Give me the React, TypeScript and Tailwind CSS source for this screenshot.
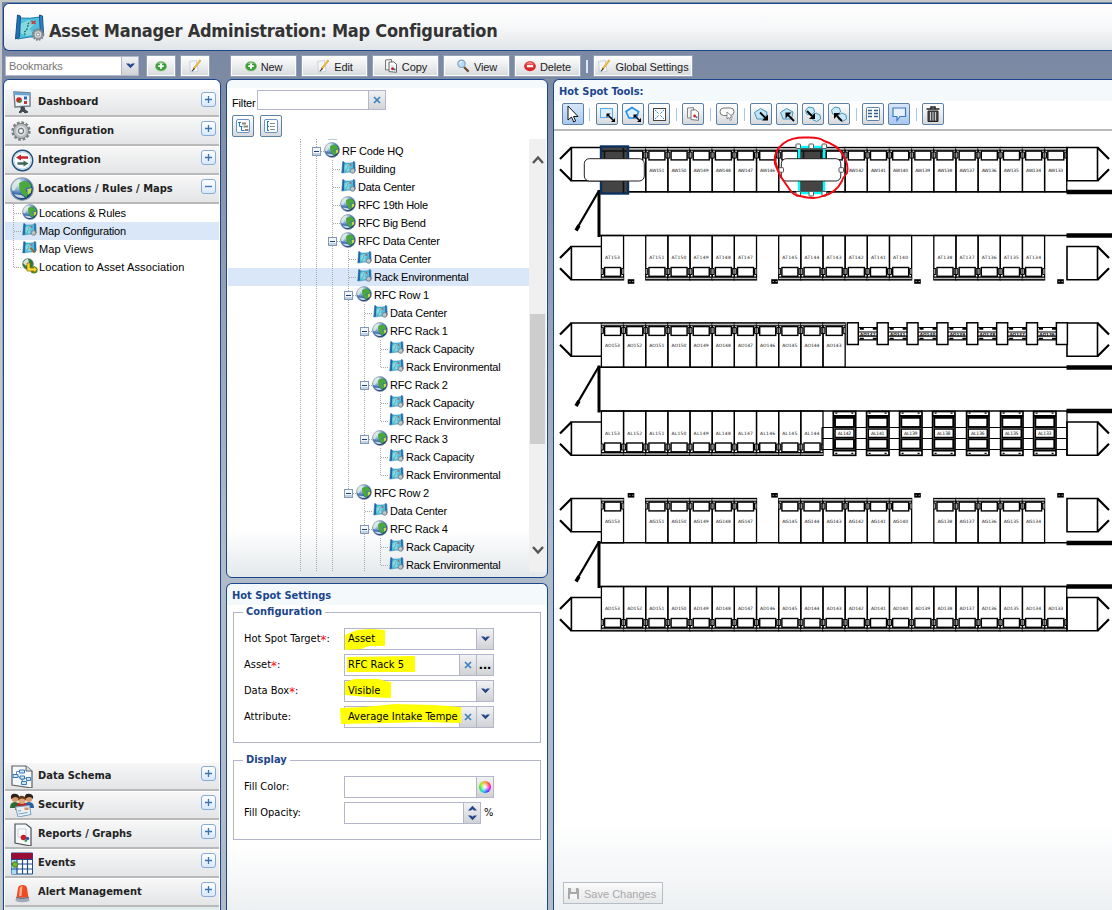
import type { ReactNode } from "react";

const title = "font-['DejaVu_Sans_Condensed','DejaVu_Sans',sans-serif] font-bold [font-stretch:condensed]";
const label = "font-['DejaVu_Sans_Condensed','DejaVu_Sans',sans-serif] text-[11px] [font-stretch:condensed]";

/* ---------- icons ---------- */
function Globe({ className }: { className: string }) {
  return (
    <svg viewBox="0 0 16 16" className={className}>
      <defs>
        <radialGradient id="sea" cx="30%" cy="22%" r="85%">
          <stop offset="0" stopColor="#f2f7fb" />
          <stop offset=".35" stopColor="#8fb2d8" />
          <stop offset=".65" stopColor="#2a5ca4" />
          <stop offset="1" stopColor="#12356e" />
        </radialGradient>
      </defs>
      <circle cx="8" cy="8" r="7.5" fill="url(#sea)" stroke="#8c9cab" strokeWidth=".7" />
      <path d="M6 4l3.500-1.500 3 1 1.800 2.400-.8 1.500-2.500-.5-1 1.800 2 2-1 3-3-2L6.300 8z" fill="#4aa83c" />
      <path d="M1.200 6.200C2 3.500 4 1.800 6.500 1.400L7 3 4.800 5.600 3 9.200 1.300 9z" fill="#dce8e4" opacity=".9" />
      <path d="M11.500 8l3-.6-.6 3-2 1.600z" fill="#c7dc4a" />
      <path d="M2.500 11.500c2 2.500 5 3 7.500 2.200L7.500 12z" fill="#dfe8ee" opacity=".85" />
    </svg>
  );
}
function GearShape({ x, y, s, fill = "#8f9aa3" }: { x: number; y: number; s: number; fill?: string }) {
  return (
    <g transform={`translate(${x} ${y}) scale(${s})`}>
      <circle r="8.200" fill="none" stroke="#7b8286" strokeWidth="2.600" strokeDasharray="2.600 1.700" />
      <circle r="7.400" fill={fill} stroke="#70787d" strokeWidth=".8" />
      <circle r="4.800" fill="#dcdfe1" />
      <circle r="2.500" fill="#f6f7f8" stroke="#6c7479" strokeWidth="1.200" />
    </g>
  );
}
function MapIcon({ className, view }: { className: string; view?: boolean }) {
  return (
    <svg viewBox="0 0 30 27" className={className}>
      <path d="M5 4q10 1 21-1l1 20q-12-1-24 2z" fill="#52bfdc" stroke="#1679a8" />
      <path d="M6 10l8-4 6 4-5 5 4 5-7 2-6-3z" fill="#93e0e6" opacity=".8" />
      <path d="M11 21c-3-3 1-4 2-7s-1-4 3-6" fill="none" stroke="#167a55" strokeWidth="1.300" strokeDasharray="2 1" />
      <path d="M17 7l4 3m0-3l-4 3" stroke="#cf3030" strokeWidth="1.400" />
      <path d="M3 1l3 1-1 21-4 2z" fill="#1f72b6" stroke="#174f87" />
      <path d="M25 1l3 1 1 18-3 3z" fill="#2c86c7" stroke="#174f87" />
      {view ? <path d="M17 14l9 10" stroke="#a6662f" strokeWidth="4" /> : <GearShape x={23.5} y={20.5} s={0.66} />}
    </svg>
  );
}
function Plus() {
  return (
    <svg viewBox="0 0 12 12" className="h-3 w-3 shrink-0">
      <ellipse cx="6" cy="6.300" rx="5.700" ry="4.800" fill="#3f9e3c" stroke="#a5cba0" strokeWidth=".6" />
      <path d="M2.400 4Q6 0 9.600 4z" fill="#8cc986" />
      <path d="M6 3.400v5.400M3.200 6.100h5.600" stroke="#fff" strokeWidth="1.900" />
    </svg>
  );
}
function Pencil() {
  return (
    <svg viewBox="0 0 14 14" className="h-3.5 w-3.5 shrink-0">
      <path d="M1.500 2.500l7-1L10 12.400l-7.500.8z" fill="#f3f5f8" stroke="#c2cad3" strokeWidth=".8" />
      <path d="M12.500 1.200L5.500 9.800" stroke="#d89b1f" strokeWidth="1.900" />
      <path d="M6 9l-2.600 3.200 1 .3 2.400-2.500z" fill="#333" />
      <path d="M12 1.600L6.200 8.600" stroke="#ffe070" strokeWidth=".8" />
    </svg>
  );
}
function CopyGlyph({ className }: { className: string }) {
  return (
    <svg viewBox="0 0 14 14" className={className}>
      <path d="M1.500 1l6-.5.5 10-6.500.5z" fill="#f4f4f4" stroke="#777" />
      <path d="M5 3.200l4.500-.4 3 2.500v8L5 12.600z" fill="#fff" stroke="#666" />
      <path d="M6.500 6h4v3h-4z" fill="#e5e8ec" />
      <circle cx="8.600" cy="9.700" r="1.500" fill="#c02127" />
      <circle cx="10.700" cy="10.600" r="1" fill="#3b61b7" />
    </svg>
  );
}
function Magnifier() {
  return (
    <svg viewBox="0 0 14 14" className="h-3.5 w-3.5 shrink-0">
      <path d="M8 8l4.600 4.600" stroke="#6b4a35" strokeWidth="2.200" />
      <circle cx="5.500" cy="4.800" r="3.700" fill="#b5dbf7" stroke="#7fa3c0" strokeWidth="1.100" />
      <path d="M3.400 4.400q.8-1.700 2.400-1.700" stroke="#fff" fill="none" />
    </svg>
  );
}
function Minus() {
  return (
    <svg viewBox="0 0 12 12" className="h-3 w-3 shrink-0">
      <ellipse cx="6" cy="6.300" rx="5.800" ry="5" fill="#d92626" />
      <path d="M1.400 4.400Q6-.4 10.600 4.400z" fill="#ee7d75" />
      <path d="M2.800 6.200h6.400" stroke="#fff" strokeWidth="2.200" />
    </svg>
  );
}
function Down() {
  return (
    <svg viewBox="0 0 9 6" className="h-[6px] w-[9px]">
      <path d="M0 .5h3l1.500 1.300L6 .5h3L4.500 5.200z" fill="#26468c" />
    </svg>
  );
}
function Cross() {
  return (
    <svg viewBox="0 0 8 8" className="h-2 w-2">
      <path d="M1 1l6 6M7 1L1 7" stroke="#3f83bd" strokeWidth="1.700" />
    </svg>
  );
}
const sec = "h-6 w-6 shrink-0";
function DashboardIcon() {
  return (
    <svg viewBox="0 0 24 24" className={sec}>
      <path d="M4 2l16 1 0 13-15 1z" fill="#eef5fa" stroke="#6a7a86" strokeWidth="1.400" />
      <path d="M4 2l16 1v2.500L4 5z" fill="#6aa5d3" />
      <circle cx="9" cy="10" r="2.800" fill="#ce2427" />
      <path d="M9 10h3a3 3 0 0 1-3 3z" fill="#2c9a44" />
      <path d="M14 6.500h3v3h-3z" fill="#2f64b5" />
      <path d="M14 11h3v3h-3z" fill="#c7333a" />
      <path d="M11 17l3 0 1 3 3 2-3 1-2-2-3 2-1-1 2-2z" fill="#43494f" stroke="#43494f" />
    </svg>
  );
}
function IntegrationIcon() {
  return (
    <svg viewBox="0 0 24 24" className={sec}>
      <circle cx="12.500" cy="12.500" r="10.200" fill="#fafdff" stroke="#1d4f7c" strokeWidth="1.400" />
      <circle cx="12.500" cy="12.500" r="8.600" fill="none" stroke="#b5cfe2" />
      <path d="M6 9.500l5-3v1.800h7v2.400h-7v1.800z" fill="#c8232b" />
      <path d="M18.500 15.500l-5-3v1.800H7.500v2.400h6v1.800z" fill="#3c6a58" />
    </svg>
  );
}
function PageIcon({ schema }: { schema?: boolean }) {
  return (
    <svg viewBox="0 0 24 24" className={sec}>
      {schema ? (
        <>
          <path d="M2 2l14 0 6 5v17L2 21z" fill="#f7f8f9" stroke="#5c6267" strokeWidth="1.200" />
          <path d="M16 2v5h6" fill="#ddd" stroke="#5c6267" />
          <path d="M6.500 11v-3.500h5M8 12l4 4 4-2M14 19l-2-3" stroke="#6b8db0" fill="none" />
          <g fill="#cfe7fa" stroke="#3678b5">
            <path d="M9.500 6h5v3h-5zM3 10.500h5v3H3zM10 12h4.500v3H10zM16.500 13.500h4v3h-4zM11.500 17.500h5v3h-5z" />
          </g>
        </>
      ) : (
        <>
          <path d="M5 2l11 0 5 4v18L5 21z" fill="#f7f8f9" stroke="#4c5257" strokeWidth="1.200" />
          <path d="M8 7h8v8H8z" fill="#fff" stroke="#c5cdd6" />
          <circle cx="13.500" cy="15.500" r="2.800" fill="#c5202a" />
          <circle cx="17.500" cy="16.500" r="1.700" fill="#2e57ab" />
          <circle cx="15.800" cy="18.800" r="1.300" fill="#35983d" />
        </>
      )}
    </svg>
  );
}
function SecurityIcon() {
  return (
    <svg viewBox="0 0 24 24" className={sec}>
      <path d="M0 15q0-6 5-6t5 6z" fill="#2d6a35" />
      <path d="M14 15q0-6 5-6t5 6z" fill="#2a5ea5" />
      <circle cx="5" cy="5.500" r="3.400" fill="#d99a6b" />
      <circle cx="19" cy="5.500" r="3.400" fill="#d99a6b" />
      <path d="M1 6Q0 .5 5 .8T9 6Q6 2 1 6zM15 6Q14 .5 19 .8T23 6Q20 2 15 6z" fill="#2d211c" />
      <path d="M5 17q1-8 7-8t6 8z" fill="#b32626" />
      <circle cx="12" cy="7.500" r="3.600" fill="#e0a577" />
      <path d="M8 7.500Q8 2.500 12 2.800t4 4.700Q12 3.500 8 7.500z" fill="#6b3a1c" />
      <path d="M5.500 14l14-1.500 1.500 9-13 2.500z" fill="#e7f1f8" stroke="#7ba0bb" />
      <path d="M8 18l3-.3M8.500 21l9-1.500" stroke="#7ba0bb" />
      <path d="M14.500 14.500h4v2.500h-4z" fill="#dd8b63" />
    </svg>
  );
}
function EventsIcon() {
  return (
    <svg viewBox="0 0 24 24" className={sec}>
      <path d="M1.500 2h21v21h-21z" fill="#fff" stroke="#1e4a8e" />
      <path d="M1.500 2h21v6h-21z" fill="#980f35" />
      <path d="M1.500 8H7v15H1.500z" fill="#a9dcf5" />
      <path d="M1 8.500h22M1 13h22M1 18h22M7 8v15M12.500 8v15M17.500 8v15" stroke="#1e4a8e" strokeWidth="1.200" />
      <circle cx="5" cy="13.500" r="2.700" fill="#78b72a" stroke="#4b7d1e" />
    </svg>
  );
}
function AlertIcon() {
  return (
    <svg viewBox="0 0 24 24" className={sec}>
      <path d="M6.500 18L8 8q.5-3 4.500-3t4.500 3l1.500 10z" fill="#ee4a23" />
      <path d="M9 16l.8-8q1-2 2.700-2l-1 10z" fill="#ffb08f" />
      <path d="M6 17.500h13l.5 3.500q-7 2.500-14 0z" fill="#a4a8b8" />
      <path d="M6 17.500q6.500 2 13 0" stroke="#686d80" fill="none" />
    </svg>
  );
}

/* ---------- header & toolbars ---------- */
function ToolButton({ icon, text, w }: { icon: ReactNode; text?: string; w: string }) {
  return (
    <div className={`flex h-[20px] shrink-0 items-center justify-center gap-1 border border-[#fbfcfd] bg-linear-to-b from-[#fdfdfd] to-[#d9dcdf] font-['Liberation_Sans',sans-serif] text-[11px] tracking-[-0.1px] text-[#1d1d1d] shadow-[0_0_0_1px_#94a0b5] ${w}`}>
      {icon}
      {text && <span className="pt-[2px]">{text}</span>}
    </div>
  );
}

/* ---------- left navigation ---------- */
function Section({ icon, text, open }: { icon: ReactNode; text: string; open?: boolean }) {
  return (
    <div className="flex h-[29px] shrink-0 items-center border-t border-t-white border-b-2 border-b-[#b9b9b9] bg-linear-to-b from-[#f7f7f7] to-[#e3e5e7] pr-[3px] pl-[5px]">
      {icon}
      <span className={`${title} ml-[4px] pt-px text-[11px] text-[#222]`}>{text}</span>
      <span className="mb-[5px] ml-auto flex h-[15px] w-[15px] items-center justify-center rounded-[3px] border border-[#86abd9] bg-linear-to-b from-white to-[#d8e8fb]">
        <svg viewBox="0 0 7 7" className="h-[7px] w-[7px]">
          <path d={open ? "M0 3.500h7" : "M0 3.500h7M3.500 0v7"} stroke="#3a74b5" strokeWidth="1.300" />
        </svg>
      </span>
    </div>
  );
}
const links = [
  { text: "Locations & Rules", icon: <Globe className="h-4 w-4" />, track: "tracking-[-0.1px]" },
  { text: "Map Configuration", icon: <MapIcon className="h-[13px] w-[15px]" />, on: true, track: "tracking-[-0.17px]" },
  { text: "Map Views", icon: <MapIcon view className="h-[13px] w-[15px]" />, track: "tracking-[0.1px]" },
  {
    text: "Location to Asset Association",
    track: "tracking-[0.1px]",
    icon: (
      <svg viewBox="0 0 16 16" className="h-4 w-4">
        <circle cx="6" cy="6" r="5.500" fill="#2b7a35" stroke="#889" strokeWidth=".6" />
        <path d="M1 5q2-4 5-4l1 3-3 4z" fill="#d7e5dc" />
        <circle cx="12" cy="12" r="3.600" fill="#3f8f30" />
        <path d="M5 5h3v5h4V8l3 3.500-3 3.500v-2H5z" fill="#ffd92b" stroke="#8a6a08" strokeWidth=".7" />
      </svg>
    ),
  },
];
function Sidebar() {
  return (
    <div className="flex w-[218px] shrink-0 flex-col rounded-t-[6px] border border-b-0 border-[#1c468c] bg-white px-px pt-[8px]">
      <Section icon={<DashboardIcon />} text="Dashboard" />
      <Section icon={<svg viewBox="0 0 24 24" className={sec}><GearShape x={11} y={12} s={1.02} fill="#b8bcbe" /></svg>} text="Configuration" />
      <Section icon={<IntegrationIcon />} text="Integration" />
      <Section icon={<Globe className={sec} />} text="Locations / Rules / Maps" open />
      <div className="flex-1">
        {links.map((l, i) => (
          <div key={l.text} className={`flex h-[18px] items-center font-['Liberation_Sans',sans-serif] text-[11px] text-black ${l.on ? "bg-[#d9e7f8]" : ""}`}>
            <Guide kind={i === 3 ? "L" : "T"} />
            <span className="flex w-[17px] shrink-0 justify-center pb-[3px]">{l.icon}</span>
            <span className={`ml-px ${l.track}`}>{l.text}</span>
          </div>
        ))}
      </div>
      <Section icon={<PageIcon schema />} text="Data Schema" />
      <Section icon={<SecurityIcon />} text="Security" />
      <Section icon={<PageIcon />} text="Reports / Graphs" />
      <Section icon={<EventsIcon />} text="Events" />
      <Section icon={<AlertIcon />} text="Alert Management" />
      <div className="h-[3px] shrink-0 bg-[#e2ebec]" />
    </div>
  );
}

/* ---------- location tree ---------- */
function Guide({ kind }: { kind: string }) {
  const v = kind === "|" || kind === "T" || kind === "-" ? 18 : kind === "L" || kind === "_" ? 9 : 0;
  const box = kind === "-" || kind === "_";
  return (
    <svg viewBox="0 0 16 18" className="h-[18px] w-4 shrink-0">
      {v > 0 && <path d={`M8.500 0V${v}`} stroke="#a8a8a8" strokeDasharray="1 1" />}
      {(kind === "T" || kind === "L" || box) && <path d="M9 9.500h7" stroke="#a8a8a8" strokeDasharray="1 1" />}
      {box && (
        <>
          <rect x="4.500" y="5.500" width="8" height="8" fill="#f2f6fa" stroke="#8299b5" />
          <path d="M5 11h7v2H5z" fill="#c3d3e5" />
          <path d="M6 9.500h5" stroke="#1d3f77" />
        </>
      )}
    </svg>
  );
}
const tree: [string, string][] = [
  ["|-", "RF Code HQ"], ["||T", "Building"], ["||T", "Data Center"], ["||T", "RFC 19th Hole"], ["||T", "RFC Big Bend"],
  ["||-", "RFC Data Center"], ["|||T", "Data Center"], ["|||T", "Rack Environmental"], ["|||-", "RFC Row 1"],
  ["||||T", "Data Center"], ["||||-", "RFC Rack 1"], ["|||||T", "Rack Capacity"], ["|||||L", "Rack Environmental"],
  ["||||-", "RFC Rack 2"], ["|||||T", "Rack Capacity"], ["|||||L", "Rack Environmental"],
  ["||||_", "RFC Rack 3"], ["|||| T", "Rack Capacity"], ["|||| L", "Rack Environmental"],
  ["|||_", "RFC Row 2"], ["||| T", "Data Center"], ["||| -", "RFC Rack 4"], ["||| |T", "Rack Capacity"], ["||| |L", "Rack Environmental"],
];
function SmallButton({ children, on }: { children: ReactNode; on?: boolean }) {
  return (
    <div className={`flex h-[22px] w-[22px] shrink-0 items-center justify-center rounded-[2px] border border-[#5d81a5] ${on ? "bg-linear-to-b from-[#d6e6fa] to-[#a9c8ef]" : "bg-linear-to-b from-white to-[#d6d9dc]"}`}>
      <svg viewBox="0 0 20 20" className="h-5 w-5">{children}</svg>
    </div>
  );
}
function TreePanel() {
  return (
    <div className="flex h-[499px] shrink-0 flex-col rounded-[6px] border border-[#1c468c] bg-[linear-gradient(to_bottom,#f4f9fb_0,#f4f9fb_8px,#fff_8px,#fff_450px,#e3e8eb_100%)] px-px pt-[10px]">
      <div className="flex h-[20px] items-end pl-[4px]">
        <span className="w-[25px] font-['Liberation_Sans',sans-serif] text-[11px] leading-[14px] tracking-[-0.15px]">Filter</span>
        <span className="h-[20px] w-[112px] border border-[#b3b6cb] bg-white" />
        <span className="flex h-[20px] w-[17px] items-center justify-center border border-l-0 border-[#b3b6cb] bg-linear-to-b from-[#f0f1f3] to-[#d3d5d8]"><Cross /></span>
      </div>
      <div className="mt-[5px] flex gap-[6px] pl-[4px]">
        <SmallButton>
          <rect x="3.500" y="3.500" width="13" height="13" rx="1.500" fill="#fff" stroke="#6d94c4" />
          <path d="M5 6.500h3M6.500 6.500v4h3M8.500 10.500v4h3" stroke="#1f78d1" fill="none" />
          <path d="M9 7.500h4M10.500 10.500h4.500M12 14h3.500" stroke="#8b8580" strokeWidth="2" />
        </SmallButton>
        <SmallButton>
          <rect x="3.500" y="3.500" width="13" height="13" rx="1.500" fill="#fff" stroke="#6d94c4" />
          <path d="M6.500 5v10M6 5.500h2M6 10.500h2M6 14.500h2" stroke="#1f78d1" fill="none" />
          <path d="M9 7.500h5M9 10.500h5M9 13.500h5" stroke="#8a8a8a" />
        </SmallButton>
      </div>
      <div className="mt-[2px] flex h-[433px]">
        <div className="w-[301px] overflow-hidden">
          <div className="flex h-[3px] pl-16">
            <svg viewBox="0 0 48 3" className="h-[3px] w-12"><path d="M8.500 0v3M24.500 0v3" stroke="#a8a8a8" strokeDasharray="1 1" /><path d="M36 0h9" stroke="#7c94a8" /></svg>
          </div>
          {tree.map(([g, text], i) => (
            <div key={i} className={`flex h-[18px] items-center pl-16 font-['Liberation_Sans',sans-serif] text-[11px] tracking-[-0.22px] whitespace-nowrap text-black ${i === 7 ? "bg-[#d9e7f8]" : ""}`}>
              {g.split("").map((c, k) => <Guide key={k} kind={c} />)}
              <span className="flex w-4 shrink-0 justify-center pb-[3px]">
                {text.startsWith("RF") ? <Globe className="h-4 w-4" /> : <MapIcon className="h-[13px] w-[15px]" />}
              </span>
              <span className="ml-[2px] pt-px">{text}</span>
            </div>
          ))}
        </div>
        <div className="flex w-[17px] flex-col items-center bg-[#f0f0f0] pt-[16px]">
          <svg viewBox="0 0 12 9" className="h-[9px] w-3"><path d="M1 8l5-5.500L11 8" stroke="#555" strokeWidth="2.400" fill="none" /></svg>
          <div className="mt-[150px] h-[130px] w-[15px] bg-[#cdcdcd]" />
          <svg viewBox="0 0 12 9" className="mt-[102px] h-[9px] w-3"><path d="M1 1l5 5.500L11 1" stroke="#555" strokeWidth="2.400" fill="none" /></svg>
        </div>
      </div>
    </div>
  );
}

/* ---------- hot spot settings ---------- */
function Trigger({ children }: { children: ReactNode }) {
  return <span className="flex w-[17px] items-center justify-center border-l border-[#b3b6cb] bg-linear-to-b from-[#f1f2f4] to-[#d0d2d6]">{children}</span>;
}
function Field({ name, star, value, mark, children }: { name: string; star?: boolean; value?: string; mark?: string; children: ReactNode }) {
  return (
    <div className="mb-[4px] flex h-[22px]">
      <span className={`${label} flex w-[100px] pt-[3px] text-black`}>
        {name}{star && <span className="text-[13px] leading-[17px] text-[#f00]">*</span>}:
      </span>
      <div className="relative flex h-[22px] w-[150px] border border-[#b3b6cb] bg-white">
        {mark && <svg viewBox="0 0 124 24" className="absolute -top-[3px] -left-[6px] h-6 w-[124px]"><path d={mark} fill="#ff0" /></svg>}
        <span className={`${label} relative flex-1 overflow-hidden pt-[2px] pl-[3px] whitespace-nowrap text-black`}>{value}</span>
        {children}
      </div>
    </div>
  );
}
function Group({ name, children, h }: { name: string; children: ReactNode; h: string }) {
  return (
    <fieldset className={`ml-[5px] w-[308px] border border-[#b3b6cb] pl-[10px] ${h}`}>
      <legend className={`${title} -ml-px px-[3px] text-[11px] leading-[14px] text-[#1c468c]`}>{name}</legend>
      {children}
    </fieldset>
  );
}
function SettingsPanel() {
  return (
    <div className="mt-[5px] flex-1 rounded-t-[6px] border border-b-0 border-[#1c468c] bg-[linear-gradient(to_bottom,#f4f9fb_0,#f4f9fb_21px,#fff_21px,#fff_260px,#edf0f2_100%)] px-px">
      <div className={`${title} h-[21px] pt-[3px] pl-[4px] text-[11px] leading-[17px] text-[#1c468c]`}>Hot Spot Settings</div>
      <Group name="Configuration" h="h-[138px]">
        <div className="pt-[9px]">
          <Field name="Hot Spot Target" star value="Asset" mark="M6 9l12-5 14-1 14 1v16H30l-8 3-16 1z"><Trigger><Down /></Trigger></Field>
          <Field name="Asset" star value="RFC Rack 5" mark="M8 5l68-1v16H8z"><Trigger><Cross /></Trigger><Trigger><span className="pb-[3px] font-['Liberation_Sans',sans-serif] text-[15px] leading-none font-bold">...</span></Trigger></Field>
          <Field name="Data Box" star value="Visible" mark="M6 4l10-3h24l6 2 6 1v16l-24-1-22-2z"><Trigger><Down /></Trigger></Field>
          <Field name="Attribute" value="Average Intake Tempe" mark="M1 4l24-1L56 0l38 1 28 2v16l-40-1-32 1-48 1z"><Trigger><Cross /></Trigger><Trigger><Down /></Trigger></Field>
        </div>
      </Group>
      <Group name="Display" h="h-[87px] mt-[10px]">
        <div className="pt-[9px]">
          <Field name="Fill Color"><Trigger><span className="h-3 w-3 rounded-full bg-[radial-gradient(circle,#fff_5%,transparent_65%),conic-gradient(#f93,#f33,#e0e,#33f,#0dd,#3d3,#9e0,#f93)]" /></Trigger></Field>
          <div className="flex">
            <span className={`${label} w-[100px] pt-[3px]`}>Fill Opacity:</span>
            <span className="flex h-[22px] w-[137px] justify-end border border-[#b3b6cb] bg-white">
              <Trigger><span className="flex flex-col items-center gap-1"><span className="rotate-180"><Down /></span><Down /></span></Trigger>
            </span>
            <span className={`${label} ml-[3px] pt-[3px]`}>%</span>
          </div>
        </div>
      </Group>
    </div>
  );
}

/* ---------- floor map ---------- */
const X0 = 601.4;
const W = 22.16;
type RowSpec = { p: string; y: number; top: boolean; cells: number[] };
const range = (a: number, b: number) => Array.from({ length: b - a + 1 }, (_, i) => a + i);
const gapped = [0, ...range(2, 6), ...range(8, 13), ...range(15, 19)];
const rows: RowSpec[] = [
  { p: "AW", y: 147.5, top: true, cells: range(0, 20) },
  { p: "AT", y: 235.5, top: false, cells: gapped },
  { p: "AO", y: 323, top: true, cells: range(0, 10) },
  { p: "AL", y: 411, top: false, cells: range(0, 9) },
  { p: "AG", y: 498.5, top: true, cells: gapped },
  { p: "AD", y: 586.5, top: false, cells: range(0, 20) },
];
function RackRow({ p, y, top, cells }: RowSpec) {
  const rail = top ? y : y + 44.3;
  const inner = top ? y + 2.7 : y + 41.6;
  const by = top ? y + 3.6 : y + 32;
  const ty = top ? y + 24 : y + 23.6;
  const capY = top ? y : y + 11;
  return (
    <g>
      {cells.map((i) => {
        const x = X0 + i * W;
        return (
          <g key={i}>
            <rect x={x} y={y} width={W} height={44.3} fill="none" stroke="#000" strokeWidth="1.300" />
            <path d={`M${x} ${(rail + inner) / 2}h${W}`} stroke="#bbb" strokeWidth="2" />
            <path d={`M${x} ${rail}h${W}M${x} ${inner}h${W}`} stroke="#000" strokeWidth="1.100" />
            <rect x={x + 3.2} y={by} width={16} height={8.8} fill="#fff" stroke="#000" strokeWidth="1.400" />
            <path d={`M${x} ${by + 1}h2v6h-2M${x + W} ${by + 1}h-2v6h2`} fill="#999" stroke="#000" strokeWidth="1" />
            <text x={x + W / 2} y={ty} textAnchor="middle" fontSize="4.500" fill="#222" textLength="15" className="font-['DejaVu_Sans',sans-serif]">{`${p}${153 - i}`}</text>
          </g>
        );
      })}
      <g fill="none" stroke="#000">
        <path d={`M${X0} ${capY}h-30v33.200h30M1067 ${capY}h30.500v33.200h-30.500z`} strokeWidth="1.600" />
        <path d={`M571.500 ${capY}l-11.500 11.500m0 10.200l11.500 11.500M1097.500 ${capY}l11.500 11.500m0 10.200l-11.500 11.500`} strokeWidth="2.200" />
        <path d={`M600 ${top ? y + 44.3 : y}H1067`} strokeWidth="1.500" />
        <path d={`M1066.500 ${top ? y + 44.5 : y}H1112`} strokeWidth="4.400" />
      </g>
      {top && (
        <g stroke="#000">
          <path d={`M599 ${y + 42.5}v47`} strokeWidth="3" />
          <path d={`M598.500 ${y + 44}L577.500 ${y + 80}`} strokeWidth="2.200" />
          <path d={`M579 ${y + 78}l-3 5`} strokeWidth="3.500" />
        </g>
      )}
    </g>
  );
}
function Handle({ x, y }: { x: number; y: number }) {
  return <rect x={x - 2} y={y - 2} width="4.500" height="4.500" rx=".6" fill="#fff" stroke="#555" />;
}
function FloorMap() {
  const ax = range(0, 7).map((i) => 847.3 + i * 29.87);
  const racks: [number, string][] = [[833.3, "142"], [866.6, "141"], [899.6, "139"], [932.6, "138"], [966.6, "136"], [1000.6, "135"], [1033.6, "133"]];
  return (
    <svg viewBox="554 132 558 510" className="block h-[510px] w-[558px] shrink-0">
      {rows.map((r) => <RackRow key={r.p} {...r} />)}
      {[281.5, 495.3].map((y) => [631, 774.5, 917.5, 1060.5].map((x) => (
        <g key={`${x}${y}`}><rect x={x - 3.3} y={y - 2.3} width="6.600" height="4.600" /><path d={`M${x - 2} ${y}h1.500m1.500 0h1.500`} stroke="#888" /></g>
      )))}
      {ax.slice(0, 7).map((x, i) => (
        <g key={x} stroke="#000" fill="none">
          <path d={`M${x + 11} 327.500h19M${x + 11} 332h19M${x + 11} 336.200h19M${x + 11} 339.800h19`} strokeWidth="1.200" />
          <path d={`M${x + 12.500} 328.800h4m9 0h4M${x + 12.500} 338.600h4m9 0h4`} strokeWidth="1.700" />
          <text x={x + 20.5} y="335.600" stroke="none" fill="#111" textAnchor="middle" fontSize="4.200" fontWeight="bold" className="font-['DejaVu_Sans',sans-serif]">{`AO${142 - i}`}</text>
        </g>
      ))}
      {ax.map((x) => <rect key={x} x={x} y="322.800" width="11" height="21.700" fill="#fff" stroke="#000" strokeWidth="1.500" />)}
      <path d="M822 427.500H1067M822 438.500H1067M822 449.500H1067M822 427.500v22M1067 411v44" stroke="#000" strokeWidth="1.200" />
      {racks.map(([x, n]) => (
        <g key={n} stroke="#000" fill="#fff">
          <rect x={x} y="411.500" width="22.400" height="43.800" strokeWidth="1.700" />
          <path d={`M${x} 416h22.400M${x} 450.500h22.400`} strokeWidth="2.200" />
          <path d={`M${x + 2} 413.200h2m14 0h2M${x + 2} 453.300h2m14 0h2`} strokeWidth="1.200" />
          <rect x={x + 1.7} y="417.800" width="19" height="9.200" strokeWidth="1.900" />
          <rect x={x + 1.7} y="429" width="19" height="8.500" strokeWidth="1.500" />
          <rect x={x + 1.7} y="439.200" width="19" height="9.400" strokeWidth="1.900" />
          <text x={x + 11.2} y="435" stroke="none" fill="#111" textAnchor="middle" fontSize="4.600" textLength="13.500" className="font-['DejaVu_Sans',sans-serif]">{`AL${n}`}</text>
        </g>
      ))}
      <rect x="601" y="146.500" width="27" height="47" fill="#444" stroke="#0b315f" strokeWidth="2.400" />
      <path d="M602 151h25M604.500 151v8M623.500 148v11M623.500 181v12" stroke="#111" strokeWidth="1.600" />
      <rect x="584.300" y="158.700" width="60" height="22.300" rx="5" fill="#fff" stroke="#222" />
      <rect x="799" y="147" width="25" height="46" fill="#444" stroke="#0ff" strokeWidth="2.400" />
      <path d="M801 151h22M803.500 151v8M821 151v8" stroke="#111" strokeWidth="1.500" />
      <rect x="781.300" y="158.700" width="59.500" height="22.300" rx="5" fill="#fff" stroke="#222" />
      {[146, 193.5].map((y) => [798, 811, 824].map((x) => <Handle key={`${x}${y}`} x={x} y={y} />))}
      <Handle x={781} y={169.7} /><Handle x={841} y={169.7} />
      <path d="M781 178L775 164Q773 151 784 143Q792 137 806 137.500Q820 137 824 141Q838 145 843 155Q849 164 847 173Q842 179 842 181Q836 193 823 196Q814 200 800 196Q793 195 790 190L781 177Q777 170 775 159" fill="none" stroke="#f00913" strokeWidth="1.900" />
    </svg>
  );
}

function Sep() {
  return <span className="-mr-px flex"><span className="mx-[6px] h-[13px] w-px shrink-0 bg-[#a6c6ec]" /></span>;
}
function Diag({ flip }: { flip?: boolean }) {
  return (
    <>
      <path d="M3.500 8.500l6-4 6.500 3.500-1.500 7H6z" fill="#bfe6f8" stroke="#4893bb" />
      {flip ? (
        <><path d="M17 17l-6-6" stroke="#000" strokeWidth="1.800" /><path d="M8.500 8.500h6l-6 6z" /></>
      ) : (
        <><path d="M9 8.500l5 5" stroke="#000" strokeWidth="1.800" /><path d="M17 16.500h-6l6-6z" /></>
      )}
    </>
  );
}
function Pair({ flip }: { flip?: boolean }) {
  return (
    <>
      <path d="M2.500 6l3.500-3 4.500 1 1 4-3.500 3-4.500-1zM9 11.500l4-2.500 4 2 .5 4-4 2.500-4-2z" fill="#c9ecf8" stroke="#4893bb" />
      {flip ? (
        <><path d="M13 17l-5-5" stroke="#000" strokeWidth="1.800" /><path d="M5 9h6l-6 6z" /></>
      ) : (
        <><path d="M4 7l5 5" stroke="#000" strokeWidth="1.800" /><path d="M12 15H6l6-6z" /></>
      )}
    </>
  );
}
function HotSpotTools() {
  return (
    <div className="flex h-[22px] items-center pl-[8px]">
      <SmallButton on><path d="M5 2v14l3.500-3 2.200 5 2-1-2.200-4.500H15z" fill="#fff" stroke="#111" /></SmallButton>
      <span className="mx-[5px] h-[13px] w-[2px] shrink-0 border-l border-[#a6c6ec]" />
      <div className="flex gap-1">
        <SmallButton><rect x="3.500" y="4.500" width="12" height="9" fill="#ddefff" stroke="#5aaaf0" /><path d="M11 11l5 5" stroke="#000" strokeWidth="1.500" /><path d="M9.500 9.500h4l-4 4zM18 18h-4l4-4z" /></SmallButton>
        <SmallButton><path d="M3 7.500l6-4 6.500 4-2 6.500H6z" fill="#ddf0ff" stroke="#1f90ea" strokeWidth="1.600" /><path d="M12 12l4 4" stroke="#000" strokeWidth="1.500" /><path d="M10.500 10.500h4l-4 4zM18 18h-4l4-4z" /></SmallButton>
        <SmallButton><rect x="4.500" y="4.500" width="12" height="12" fill="#fff" stroke="#444" /><path d="M6 6l3.500 3.500M15 6l-3.500 3.500M6 15l3.500-3.500M15 15l-3.500-3.500" stroke="#328bd0" strokeDasharray="2 1" /></SmallButton>
      </div>
      <Sep />
      <SmallButton><g transform="translate(3 3)"><path d="M1.500 1l6-.5.5 10-6.500.5z" fill="#f4f4f4" stroke="#888" /><path d="M5 3.200l4.500-.4 3 2.500v8L5 12.600z" fill="#fff" stroke="#777" /><circle cx="8.600" cy="9" r="1.400" fill="#d02127" /><circle cx="10.500" cy="10.300" r="1" fill="#3b61b7" /></g></SmallButton>
      <Sep />
      <SmallButton><rect x="3" y="4" width="14" height="7.500" rx="3.700" fill="#fafafa" stroke="#777" /><path d="M10 8v7l1.800-1.500 1.500 3 1.200-.5-1.300-3h2.300z" fill="#fff" stroke="#777" strokeWidth=".8" /></SmallButton>
      <Sep />
      <div className="flex gap-1">
        <SmallButton><Diag /></SmallButton>
        <SmallButton><Diag flip /></SmallButton>
        <SmallButton><Pair /></SmallButton>
        <SmallButton><Pair flip /></SmallButton>
      </div>
      <Sep />
      <div className="flex gap-1">
        <SmallButton><rect x="3.500" y="3.500" width="13" height="13" rx="1" fill="#fff" stroke="#5d81a5" /><path d="M5 6.500h4M5 9.500h4M5 12.500h4M11 6.500h4M11 9.500h4M11 12.500h4" stroke="#315f91" strokeWidth="1.300" /></SmallButton>
        <SmallButton on><path d="M4 4h12.500v8.500H11L8 16.500v-4H4z" fill="#e8f2fe" stroke="#3d79bd" strokeWidth="1.200" /></SmallButton>
      </div>
      <Sep />
      <SmallButton><path d="M3.500 5h13M8 4.500V3h4v1.500" stroke="#222" strokeWidth="1.500" fill="none" /><path d="M5 7h10v10.500H5z" fill="#4c4c4c" stroke="#222" /><path d="M7.500 8v8.500M10 8v8.500M12.500 8v8.500" stroke="#c9c9c9" /></SmallButton>
    </div>
  );
}

export default function App() {
  return (
    <div className="flex h-[910px] w-[1112px] flex-col overflow-hidden border-t-2 border-l-2 border-[#c5c8c8] bg-[linear-gradient(to_bottom,#7787a3_0,#7d8aa4_80px,#b1bccb_560px,#b1bccb_100%)] pl-px">
      <div className="mt-px flex h-[48px] shrink-0 items-center rounded-l-[6px] border border-r-0 border-[#1c468c] bg-linear-to-b from-white via-[#f7f8f9] to-[#e1e5e8] pl-[10px]">
        <MapIcon className="h-[27px] w-[31px]" />
        <h1 className={`${title} ml-[4px] pt-[7px] text-[18px] leading-[20px] tracking-[-0.23px] whitespace-nowrap text-[#333]`}>Asset Manager Administration: Map Configuration</h1>
      </div>
      <div className="flex h-[28px] shrink-0 items-center pt-[2px] pl-[2px]">
        <div className="flex h-5 w-[134px] border border-[#b3b6cb] bg-white">
          <span className="flex-1 pl-[3px] font-['Liberation_Sans',sans-serif] text-[11px] leading-[19px] tracking-[-0.15px] text-[#777]">Bookmarks</span>
          <Trigger><Down /></Trigger>
        </div>
        <div className="ml-[8px] flex gap-[6px]">
          <ToolButton w="w-[28px]" icon={<Plus />} />
          <ToolButton w="w-[28px]" icon={<Pencil />} />
        </div>
        <div className="ml-[22px] flex gap-[6px]">
          <ToolButton w="w-[65px]" icon={<Plus />} text="New" />
          <ToolButton w="w-[65px]" icon={<Pencil />} text="Edit" />
          <ToolButton w="w-[65px]" icon={<CopyGlyph className="h-3.5 w-3.5" />} text="Copy" />
          <ToolButton w="w-[65px]" icon={<Magnifier />} text="View" />
          <ToolButton w="w-[65px]" icon={<Minus />} text="Delete" />
        </div>
        <span className="mx-[6px] h-[13px] w-[2px] bg-[#dbe8f8]" />
        <ToolButton w="w-[98px]" icon={<Pencil />} text="Global Settings" />
      </div>
      <div className="flex min-h-0 flex-1">
        <Sidebar />
        <div className="ml-[5px] flex w-[322px] shrink-0 flex-col">
          <TreePanel />
          <SettingsPanel />
        </div>
        <div className="ml-[5px] flex flex-1 flex-col overflow-hidden rounded-tl-[6px] border border-r-0 border-b-0 border-[#1c468c] bg-[linear-gradient(to_bottom,#f4f9fb_0,#f4f9fb_21px,#fff_21px,#fff_740px,#edf0f2_100%)]">
          <div className={`${title} h-[23px] shrink-0 pt-[3px] pl-[5px] text-[11px] leading-[17px] text-[#1c468c]`}>Hot Spot Tools:</div>
          <HotSpotTools />
          <div className="mt-[4px] mb-px h-[2px] shrink-0 bg-[#b9b9b9]" />
          <FloorMap />
          <div className="mt-auto mb-[6px] ml-[9px] flex h-[22px] w-[100px] items-center gap-[4px] border border-[#b5bdc8] bg-linear-to-b from-[#fafafa] to-[#e6e8ea] pl-[3px] font-['Liberation_Sans',sans-serif] text-[11px] text-[#a9a9a9]">
            <svg viewBox="0 0 13 13" className="h-[13px] w-[13px]">
              <path d="M1 1h10l1 1v10H1z" fill="#a9a9a9" /><path d="M4 1h5v4H4z" fill="#eee" /><path d="M3 7h7v5H3z" fill="#f6f6f6" />
            </svg>
            <span className="pt-[2px]">Save Changes</span>
          </div>
        </div>
      </div>
    </div>
  );
}
